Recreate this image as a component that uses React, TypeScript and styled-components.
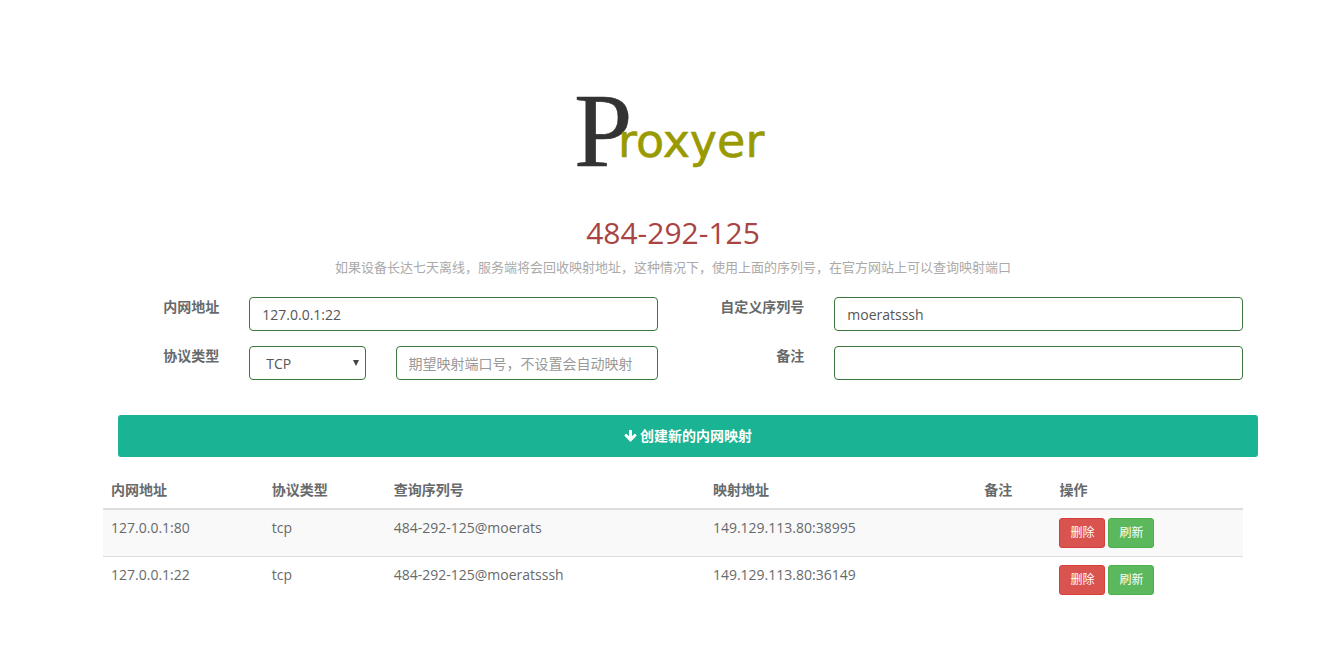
import React, { useState } from "react";
import styled, { createGlobalStyle, css } from "styled-components";

const sans = `"Open Sans", "Noto Sans CJK SC", sans-serif`;

const GlobalStyle = createGlobalStyle`
  *, *::before, *::after { box-sizing: border-box; }
  body {
    margin: 0;
    background: #fff;
    color: #676a6c;
    font-family: ${sans};
    font-size: 14px;
    line-height: 20px;
  }
`;

const Page = styled.main`
  padding: 64px 0 40px 2px;
`;

const Container = styled.div`
  max-width: 1140px;
  margin: 0 auto;
`;

const Header = styled.header`
  display: flex;
  flex-direction: column;
  align-items: center;
  text-align: center;
`;

const Logo = styled.svg`
  display: block;
  width: 200px;
  height: 132px;
`;

const Serial = styled.h1`
  margin: 20px 0 7px;
  font-size: 30px;
  line-height: 34px;
  font-weight: 400;
  color: #a94442;
`;

const Hint = styled.p`
  margin: 0;
  font-size: 13px;
  color: #aaa;
`;

const Form = styled.form`
  display: grid;
  grid-template-columns: 1fr 1fr;
  row-gap: 15px;
  margin: 20px -15px 0;
`;

const Group = styled.div`
  display: grid;
  grid-template-columns: 1fr 3fr;
`;

const Label = styled.label`
  padding: 0 15px;
  text-align: right;
  font-weight: 700;
`;

const Fields = styled.div`
  display: grid;
  grid-template-columns: 1fr 2fr;
`;

const Cell = styled.div`
  position: relative;
  padding: 0 15px;
`;

const control = css`
  display: block;
  width: 100%;
  height: 34px;
  border: 1px solid #3c763d;
  border-radius: 4px;
  background: #fff;
  color: #555;
  font-family: ${sans};
  font-size: 14px;
  line-height: 20px;
`;

const Input = styled.input`
  ${control}
  padding: 6px 12px;
  &::placeholder { color: #999; opacity: 1; }
`;

const Select = styled.select`
  ${control}
  padding: 7px 16px 6px;
  appearance: none;
`;

const Caret = styled.svg`
  position: absolute;
  top: 14px;
  right: 22px;
  width: 6px;
  height: 6px;
  pointer-events: none;
`;

const Submit = styled.button`
  grid-column: 1 / -1;
  display: flex;
  align-items: center;
  justify-content: center;
  gap: 3px;
  height: 42px;
  margin: 20px 0 0 30px;
  border: 0;
  border-radius: 3px;
  background: #1ab394;
  color: #fff;
  font-family: ${sans};
  font-size: 14px;
  font-weight: 700;
  line-height: 20px;
  cursor: pointer;
`;

const Table = styled.table`
  width: 100%;
  margin-top: 15px;
  table-layout: fixed;
  border-collapse: separate;
  border-spacing: 0;
`;

const Th = styled.th<{ $share: number }>`
  width: ${(p) => p.$share}%;
  padding: 8px;
  border-bottom: 2px solid #ddd;
  text-align: left;
  font-weight: 700;
`;

const Row = styled.tr`
  &:nth-child(odd) { background: #f9f9f9; }
  & + & > td { border-top: 1px solid #ddd; }
`;

const Td = styled.td`
  padding: 8px;
  vertical-align: top;
`;

const Actions = styled.div`
  display: flex;
  gap: 3px;
`;

const ActionButton = styled.button<{ $danger?: boolean }>`
  width: 46px;
  height: 30px;
  padding: 0;
  border: 1px solid ${(p) => (p.$danger ? "#d43f3a" : "#4cae4c")};
  border-radius: 3px;
  background: ${(p) => (p.$danger ? "#d9534f" : "#5cb85c")};
  color: #fff;
  font-family: ${sans};
  font-size: 12px;
  line-height: 18px;
  cursor: pointer;
`;

const columns = [
  { title: "内网地址", share: 14.1 },
  { title: "协议类型", share: 10.7 },
  { title: "查询序列号", share: 28 },
  { title: "映射地址", share: 23.8 },
  { title: "备注", share: 6.6 },
  { title: "操作", share: 16.8 },
];

const mappings = [
  { local: "127.0.0.1:80", protocol: "tcp", serial: "484-292-125@moerats", remote: "149.129.113.80:38995", note: "" },
  { local: "127.0.0.1:22", protocol: "tcp", serial: "484-292-125@moeratsssh", remote: "149.129.113.80:36149", note: "" },
];

export default function App() {
  const [address, setAddress] = useState("127.0.0.1:22");
  const [serial, setSerial] = useState("moeratsssh");

  return (
    <>
      <GlobalStyle />
      <Page>
        <Container>
          <Header>
            <Logo viewBox="0 0 200 132" role="img" aria-label="Proxyer">
              <text x="1" y="102" fill="#333" stroke="#333" strokeWidth="0.5" fontFamily="'Liberation Serif', serif" fontSize="105">P</text>
              <text x="45" y="93" fill="#990" stroke="#990" strokeWidth="0.6" strokeLinejoin="round" fontFamily="'DejaVu Sans', sans-serif" fontSize="46">roxyer</text>
            </Logo>
            <Serial>484-292-125</Serial>
            <Hint>如果设备长达七天离线，服务端将会回收映射地址，这种情况下，使用上面的序列号，在官方网站上可以查询映射端口</Hint>
          </Header>

          <Form onSubmit={(e) => e.preventDefault()}>
            <Group>
              <Label htmlFor="address">内网地址</Label>
              <Cell>
                <Input id="address" value={address} onChange={(e) => setAddress(e.target.value)} />
              </Cell>
            </Group>
            <Group>
              <Label htmlFor="serial">自定义序列号</Label>
              <Cell>
                <Input id="serial" value={serial} onChange={(e) => setSerial(e.target.value)} />
              </Cell>
            </Group>
            <Group>
              <Label htmlFor="protocol">协议类型</Label>
              <Fields>
                <Cell>
                  <Select id="protocol" defaultValue="TCP">
                    <option>TCP</option>
                    <option>UDP</option>
                  </Select>
                  <Caret viewBox="0 0 6 6" aria-hidden="true">
                    <path d="M0 0h6L3 6z" fill="#444" />
                  </Caret>
                </Cell>
                <Cell>
                  <Input aria-label="映射端口号" placeholder="期望映射端口号，不设置会自动映射" />
                </Cell>
              </Fields>
            </Group>
            <Group>
              <Label htmlFor="note">备注</Label>
              <Cell>
                <Input id="note" />
              </Cell>
            </Group>
            <Submit type="submit">
              <svg width="13" height="14" viewBox="0 0 13 14" aria-hidden="true">
                <path d="M5 1.7q0-.7.7-.7h1.6q.7 0 .7.7v5.6l2.300-2.300q.5-.5 1 0l1 1q.5.5 0 1L7 12.600q-.5.5-1 0L.7 7q-.5-.5 0-1l1-1q.5-.5 1 0L5 7.300z" fill="#fff" />
              </svg>
              创建新的内网映射
            </Submit>
          </Form>

          <Table>
            <thead>
              <tr>
                {columns.map((c) => (
                  <Th key={c.title} $share={c.share} scope="col">{c.title}</Th>
                ))}
              </tr>
            </thead>
            <tbody>
              {mappings.map((m) => (
                <Row key={m.local}>
                  <Td>{m.local}</Td>
                  <Td>{m.protocol}</Td>
                  <Td>{m.serial}</Td>
                  <Td>{m.remote}</Td>
                  <Td>{m.note}</Td>
                  <Td>
                    <Actions>
                      <ActionButton type="button" $danger>删除</ActionButton>
                      <ActionButton type="button">刷新</ActionButton>
                    </Actions>
                  </Td>
                </Row>
              ))}
            </tbody>
          </Table>
        </Container>
      </Page>
    </>
  );
}
